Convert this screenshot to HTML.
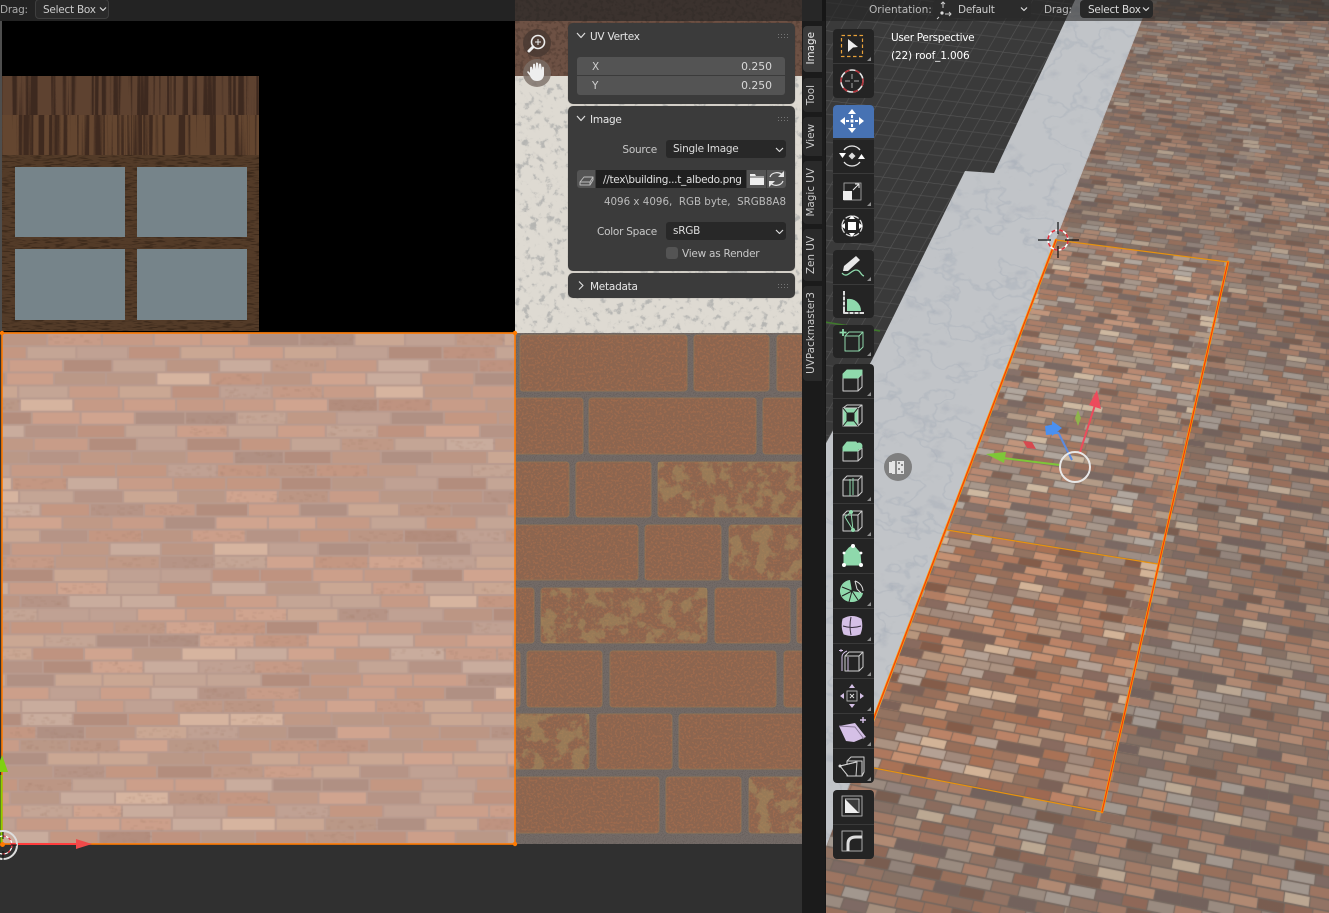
<!DOCTYPE html>
<html><head><meta charset="utf-8"><style>
html,body{margin:0;padding:0;background:#303030}
body{position:relative;width:1329px;height:913px;overflow:hidden;font:10.5px "DejaVu Sans","Liberation Sans",sans-serif;letter-spacing:-.25px;color:#ddd}
svg{color-interpolation-filters:sRGB}
.a{position:absolute}
svg,canvas{position:absolute;left:0;top:0}
.t{position:absolute;white-space:pre;line-height:14px;margin-top:1px}
.panel{position:absolute;left:568px;width:227px;background:#3b3b3b;border-radius:5px;box-shadow:0 0 1px rgba(0,0,0,.3)}
.f{position:absolute;background:#545454}
.dd{position:absolute;background:#282828;border-radius:3px;height:18px;left:666px;width:120px;line-height:19px;text-indent:7px;color:#ddd}
.tab{position:absolute;left:803px;width:19px;background:#2a2a2a;border-radius:4px 0 0 4px;color:#ccc}
.tab span{position:absolute;left:1px;bottom:7px;writing-mode:vertical-rl;transform:rotate(180deg);line-height:15px;white-space:pre;font-size:10.4px;letter-spacing:0}
</style></head><body>

<div class="a" style="left:0;top:0;width:825px;height:913px;background:#303030"></div>
<div class="a" style="left:0;top:0;width:515px;height:332px;background:#000"></div>
<div class="a" style="left:515px;top:0;width:287px;height:76px;background:#6d5144"></div>
<div class="a" style="left:515px;top:75px;width:287px;height:258px;background:#dedad2"></div>
<div class="a" style="left:2px;top:333px;width:513px;height:511px;background:#c89f8d"></div>
<div class="a" style="left:515px;top:333px;width:287px;height:511px;background:#84604a"></div>
<div class="a" style="left:825px;top:0;width:504px;height:913px;background:#3a3a3a"></div>

<svg width="1329" height="913" viewBox="0 0 1329 913">
<defs>
<filter id="crack" x="0" y="0" width="100%" height="100%"><feTurbulence type="fractalNoise" baseFrequency=".13" numOctaves="5" seed="7"/><feColorMatrix values="0 0 0 0 .71 0 0 0 0 .71 0 0 0 0 .70 1 0 0 0 0"/><feComponentTransfer><feFuncA type="table" tableValues="0 0 0 0 0 0 .1 .8 1 1 1"/></feComponentTransfer></filter>
<filter id="vein" x="0" y="0" width="100%" height="100%"><feTurbulence type="fractalNoise" baseFrequency=".02 .03" numOctaves="4" seed="3"/><feColorMatrix values="0 0 0 0 .62 0 0 0 0 .65 0 0 0 0 .70 1 0 0 0 0"/><feComponentTransfer><feFuncA type="table" tableValues="0 0 0 0 0 0 0 0 0 0 0 0 0 0 0 .7 0 0 0 0 0 0 0 0 0 0 0 0 0 0 0"/></feComponentTransfer></filter>
<filter id="spot" x="0" y="0" width="100%" height="100%"><feTurbulence type="fractalNoise" baseFrequency=".04 .06" numOctaves="4" seed="18"/><feColorMatrix values="0 0 0 0 .62 0 0 0 0 .65 0 0 0 0 .70 1 0 0 0 0"/><feComponentTransfer><feFuncA type="table" tableValues="0 0 0 0 0 0 0 .3 .9 1 1"/></feComponentTransfer></filter>
<filter id="mott" x="0" y="0" width="100%" height="100%"><feTurbulence type="fractalNoise" baseFrequency=".45" numOctaves="2" seed="5"/><feColorMatrix values="0 0 0 0 .67 0 0 0 0 .44 0 0 0 0 .31 7 0 0 0 -3.5"/></filter>
<filter id="grain2" x="0" y="0" width="100%" height="100%"><feTurbulence type="fractalNoise" baseFrequency=".09 .7" numOctaves="2" seed="9"/><feColorMatrix values="0 0 0 0 .18 0 0 0 0 .12 0 0 0 0 .08 7 0 0 0 -3.6"/></filter>
<filter id="wood" x="0" y="0" width="100%" height="100%"><feTurbulence type="fractalNoise" baseFrequency=".18 .002" numOctaves="3" seed="11"/><feColorMatrix values="0 0 0 0 .2 0 0 0 0 .13 0 0 0 0 .1 8 0 0 0 -4"/></filter>
<filter id="wood2" x="0" y="0" width="100%" height="100%"><feTurbulence type="fractalNoise" baseFrequency=".2 .002" numOctaves="3" seed="23"/><feColorMatrix values="0 0 0 0 .2 0 0 0 0 .13 0 0 0 0 .1 8 0 0 0 -4"/></filter>
<filter id="blotch" x="0" y="0" width="100%" height="100%"><feTurbulence type="fractalNoise" baseFrequency=".07" numOctaves="4" seed="14"/><feColorMatrix values="0 0 0 0 .64 0 0 0 0 .56 0 0 0 0 .38 9 0 0 0 -4.4"/></filter>
<filter id="mort" x="0" y="0" width="100%" height="100%"><feTurbulence type="fractalNoise" baseFrequency=".9" numOctaves="1" seed="2"/><feColorMatrix values="0 0 0 0 .3 0 0 0 0 .28 0 0 0 0 .27 7 0 0 0 -3.5"/></filter>
<filter id="browng" x="0" y="0" width="100%" height="100%"><feTurbulence type="fractalNoise" baseFrequency=".25" numOctaves="3" seed="6"/><feColorMatrix values="0 0 0 0 .32 0 0 0 0 .24 0 0 0 0 .2 7 0 0 0 -3.5"/></filter>
<pattern id="grid" width="75" height="75" patternUnits="userSpaceOnUse" patternTransform="matrix(.99 .12 -.5 .87 0 0)"><path d="M15 0V75M30 0V75M45 0V75M60 0V75M0 15H75M0 30H75M0 45H75M0 60H75" stroke="#4b4b4b" stroke-width="1" fill="none"/><path d="M0 0H75M0 0V75" stroke="#585858" stroke-width="1.2" fill="none"/></pattern>
<clipPath id="marbleC"><path d="M1075 0H1150L1056 240 875 720 825 850V445L872 360 965 171 994 173Z"/></clipPath>
<clipPath id="rbC"><rect x="515" y="333" width="287" height="511"/></clipPath>
<clipPath id="patch"><rect x="658" y="462" width="150" height="55"/><rect x="729" y="525" width="80" height="55"/><rect x="541" y="588" width="166" height="55"/><rect x="505" y="714" width="84" height="55"/><rect x="749" y="777" width="60" height="56"/></clipPath>
<g id="bks">
<rect x="520" y="335" rx="3" width="167" height="56"/><rect x="694" y="335" rx="3" width="75" height="56"/><rect x="777" y="335" rx="3" width="40" height="56"/>
<rect x="505" y="398" rx="3" width="78" height="56"/><rect x="589" y="398" rx="3" width="167" height="56"/><rect x="763" y="398" rx="3" width="50" height="56"/>
<rect x="505" y="462" rx="3" width="64" height="55"/><rect x="576" y="462" rx="3" width="75" height="55"/><rect x="658" y="462" rx="3" width="150" height="55"/>
<rect x="505" y="525" rx="3" width="133" height="55"/><rect x="645" y="525" rx="3" width="76" height="55"/><rect x="729" y="525" rx="3" width="80" height="55"/>
<rect x="505" y="588" rx="3" width="29" height="55"/><rect x="541" y="588" rx="3" width="166" height="55"/><rect x="715" y="588" rx="3" width="75" height="55"/><rect x="797" y="588" rx="3" width="20" height="55"/>
<rect x="505" y="651" rx="3" width="15" height="56"/><rect x="527" y="651" rx="3" width="75" height="56"/><rect x="610" y="651" rx="3" width="166" height="56"/><rect x="784" y="651" rx="3" width="30" height="56"/>
<rect x="505" y="714" rx="3" width="84" height="55"/><rect x="597" y="714" rx="3" width="75" height="55"/><rect x="679" y="714" rx="3" width="130" height="55"/>
<rect x="505" y="777" rx="3" width="154" height="56"/><rect x="666" y="777" rx="3" width="75" height="56"/><rect x="749" y="777" rx="3" width="60" height="56"/>
</g>
<mask id="bkm" maskUnits="userSpaceOnUse" x="500" y="330" width="320" height="520"><use href="#bks" fill="#fff"/></mask>
</defs>

<rect x="515" y="75" width="287" height="258" filter="url(#crack)"/>
<rect x="515" y="0" width="287" height="76" fill="#6d5144"/>
<rect x="515" y="0" width="287" height="76" filter="url(#browng)" opacity=".6"/>

<rect x="2" y="76" width="257" height="40" fill="#5e4230"/>
<rect x="2" y="76" width="257" height="39" filter="url(#wood)" opacity=".75"/>
<rect x="2" y="115" width="257" height="40" fill="#644630"/>
<rect x="2" y="115" width="257" height="40" filter="url(#wood2)" opacity=".75"/>
<rect x="2" y="155" width="257" height="176" fill="#533b28"/>
<rect x="2" y="155" width="257" height="176" filter="url(#grain2)" opacity=".55"/>
<g fill="#76848a"><rect x="15" y="167" width="110" height="70"/><rect x="137" y="167" width="110" height="70"/><rect x="15" y="249" width="110" height="71"/><rect x="137" y="249" width="110" height="71"/></g>
<rect x="0" y="21" width="2" height="310" fill="#4e4e4e"/>

<g clip-path="url(#rbC)">
<rect x="515" y="333" width="287" height="511" fill="#736a66"/>
<rect x="515" y="333" width="287" height="511" filter="url(#mort)" opacity=".25"/>
<use href="#bks" fill="#8c654f" stroke="#8f7153" stroke-width="1"/>
<g mask="url(#bkm)"><rect x="515" y="333" width="287" height="511" filter="url(#mott)" opacity=".55"/></g>
<g clip-path="url(#patch)"><rect x="515" y="333" width="287" height="511" filter="url(#blotch)" opacity=".5"/></g>
</g>

<rect x="825" y="0" width="504" height="913" fill="url(#grid)"/>
<path d="M825 322L880 331" stroke="#3f7a2c" stroke-width="1.5"/>
<path d="M1075 0H1150L1056 240 875 720 825 850V445L872 360 965 171 994 173Z" fill="#c1c4c8"/>
<g clip-path="url(#marbleC)"><rect x="825" y="0" width="330" height="851" filter="url(#spot)" opacity=".35"/><rect x="825" y="0" width="330" height="851" filter="url(#vein)" opacity=".45"/></g>
<path d="M1150 0H1329V913H825V850L875 720 1056 240Z" fill="#98776a"/>
</svg>

<canvas id="cL" width="513" height="511" style="left:2px;top:333px"></canvas>
<canvas id="cV" width="504" height="913" style="left:825px;top:0"></canvas>

<svg width="1329" height="913" viewBox="0 0 1329 913">
<defs><linearGradient id="dk" x1="0" y1="0" x2="0" y2="1"><stop offset="0" stop-color="#6a6462" stop-opacity=".38"/><stop offset=".5" stop-color="#6a6462" stop-opacity=".2"/><stop offset="1" stop-color="#6a6462" stop-opacity=".22"/></linearGradient></defs>
<path d="M1150 0H1329V913H825V850L856 765 1102 812 1228 262 1056 240Z" fill="url(#dk)"/>
<path d="M947 530L1158 564 1102 812 856 765Z" fill="#d86a2a" opacity=".07"/>
<path d="M1056 240L1228 262 1158 564 947 530Z" fill="#a8a8a8" opacity=".1"/>
<g fill="none" stroke-linecap="round">
<path d="M1056 240L1228 262" stroke="#e8920e" stroke-width="1.2"/>
<path d="M947 530L1158 564" stroke="#e8920e" stroke-width="1.2"/>
<path d="M874 768L1102 812" stroke="#e8920e" stroke-width="1.2"/>
<path d="M1056 240L856 765" stroke="#ff9a00" stroke-width="2.6"/>
<path d="M1056 240L856 765" stroke="#f03a10" stroke-width="1.1"/>
<path d="M1228 262L1102 812" stroke="#ff9a00" stroke-width="2.6"/>
<path d="M1228 262L1102 812" stroke="#f03a10" stroke-width="1.1"/>
</g>
<circle cx="1058" cy="240" r="10" fill="none" stroke="#fff" stroke-width="1.6"/>
<circle cx="1058" cy="240" r="10" fill="none" stroke="#e0303c" stroke-width="1.6" stroke-dasharray="4 4"/>
<path d="M1038 240H1051M1065 240H1079M1058 222V234M1058 246V258" stroke="#111" stroke-width="1.2"/>
<g fill="none">
<path d="M1080 452L1095 405" stroke="#ec4b5c" stroke-width="2"/><path d="M1097 390L1101 409 1089 405Z" fill="#ec4b5c"/>
<path d="M1060 465L1003 458" stroke="#7ec638" stroke-width="2"/><path d="M986 454L1006 452 1004 463Z" fill="#7ec638"/>
<path d="M1072 460L1058 432" stroke="#5b8be0" stroke-width="2"/><path d="M1052 421L1062 428 1052 436Z" fill="#4a90f0"/><path d="M1045 426L1056 424 1058 434 1046 435Z" fill="#4a90f0"/>
<path d="M1078 410L1081 418 1078 426 1075 418Z" fill="#8fb44c"/>
<path d="M1023 441L1032 442 1036 449 1027 448Z" fill="#d6494f"/>
<circle cx="1075" cy="467" r="15" stroke="#e8e8e8" stroke-width="2"/>
</g>
<circle cx="898" cy="467" r="14" fill="#7f7f7f"/>
<path d="M892 461h12v13h-12zM889 462h3v11h-3z" fill="#e4e4e4"/><path d="M896 461v13M899 462v2M902 464v2M899 468v2M902 471v2" stroke="#8a8a8a" stroke-width="2"/>

<rect x="2" y="333" width="513" height="511" fill="none" stroke="#ff7a00" stroke-width="1.6"/>
<g fill="#ff7a00"><circle cx="2" cy="333" r="2.2"/><circle cx="515" cy="333" r="2.2"/><circle cx="515" cy="844" r="2.2"/></g>
<path d="M1.500 844V775" stroke="#8bd000" stroke-width="2"/><path d="M2 755L8 772H-4Z" fill="#7fd010"/>
<path d="M10 844H78" stroke="#ff3c3c" stroke-width="2"/><path d="M92 844L76 839V849Z" fill="#f04a4a"/>
<circle cx="3" cy="845" r="14" fill="none" stroke="#ddd" stroke-width="2"/>
<circle cx="3" cy="845" r="9" fill="none" stroke="#fff" stroke-width="1.2"/>
<circle cx="3" cy="845" r="9" fill="none" stroke="#e0303c" stroke-width="1.2" stroke-dasharray="3 3"/>
<path d="M3 832V839M3 851V860M11 845H17" stroke="#111" stroke-width="1"/>
<circle cx="2.500" cy="844.500" r="2.500" fill="#ff7a00"/>
</svg>

<div class="a" style="left:0;top:0;width:515px;height:21px;background:#232323"></div>
<div class="a" style="left:515px;top:0;width:310px;height:21px;background:rgba(35,35,35,.68)"></div>
<div class="a" style="left:825px;top:0;width:504px;height:21px;background:rgba(35,35,35,.58)"></div>
<div class="a" style="left:0;top:21px;width:2px;height:310px;background:#4e4e4e"></div>
<div class="t" style="left:0;top:2px;color:#aaa">Drag:</div>
<div class="a" style="left:35px;top:-1px;width:72px;height:18px;background:#2a2a2a;border:1px solid #3f3f3f;border-radius:4px"></div>
<div class="t" style="left:43px;top:2px;color:#ccc">Select Box</div>
<div class="t" style="left:869px;top:2px;color:#bbb;font-size:10.6px;letter-spacing:-.05px">Orientation:</div>
<div class="a" style="left:933px;top:0;width:98px;height:18px;background:#2b2b2b;border-radius:4px"></div>
<div class="t" style="left:958px;top:2px;color:#ccc">Default</div>
<div class="t" style="left:1044px;top:2px;color:#bbb">Drag:</div>
<div class="a" style="left:1080px;top:0;width:73px;height:18px;background:#282828;border-radius:4px"></div>
<div class="t" style="left:1088px;top:2px;color:#ddd">Select Box</div>

<div class="a" style="left:802px;top:21px;width:23px;height:892px;background:#1b1b1b"></div>
<div class="a" style="left:822px;top:0;width:3px;height:21px;background:#161616"></div>
<div class="a" style="left:825px;top:0;width:1px;height:913px;background:#161616"></div>
<div class="tab" style="top:26px;height:46px;background:#3b3b3b;color:#eee"><span>Image</span></div>
<div class="tab" style="top:78px;height:34px"><span>Tool</span></div>
<div class="tab" style="top:117px;height:39px"><span>View</span></div>
<div class="tab" style="top:161px;height:63px"><span>Magic UV</span></div>
<div class="tab" style="top:229px;height:52px"><span>Zen UV</span></div>
<div class="tab" style="top:286px;height:95px"><span>UVPackmaster3</span></div>

<div class="panel" style="top:23px;height:81px"></div>
<div class="panel" style="top:106px;height:165px"></div>
<div class="panel" style="top:273px;height:25px"></div>
<div class="t" style="left:590px;top:29px;color:#e6e6e6">UV Vertex</div>
<div class="f" style="left:577px;top:57px;width:208px;height:18px;border-radius:3px 3px 0 0"></div>
<div class="f" style="left:577px;top:76px;width:208px;height:19px;border-radius:0 0 3px 3px"></div>
<div class="t" style="left:592px;top:59px;color:#d0d0d0">X</div>
<div class="t" style="left:592px;top:78px;color:#d0d0d0">Y</div>
<div class="t" style="right:557px;top:59px;color:#d8d8d8;font-size:10.8px;letter-spacing:0">0.250</div>
<div class="t" style="right:557px;top:78px;color:#d8d8d8;font-size:10.8px;letter-spacing:0">0.250</div>
<div class="t" style="left:590px;top:112px;color:#e6e6e6">Image</div>
<div class="t" style="right:672px;top:142px;color:#c8c8c8">Source</div>
<div class="dd" style="top:140px">Single Image</div>
<div class="f" style="left:577px;top:170px;width:18px;height:18px;border-radius:3px 0 0 3px"></div>
<div class="a" style="left:596px;top:170px;width:150px;height:18px;background:#1f1f1f"></div>
<div class="t" style="left:603px;top:172px;color:#e0e0e0;letter-spacing:-.3px">//tex\building...t_albedo.png</div>
<div class="f" style="left:747px;top:170px;width:19px;height:18px"></div>
<div class="f" style="left:767px;top:170px;width:19px;height:18px;border-radius:0 3px 3px 0"></div>
<div class="t" style="right:543px;top:194px;color:#bcbcbc;font-size:10.3px;letter-spacing:0">4096 x 4096,  RGB byte,  SRGB8A8</div>
<div class="t" style="right:672px;top:224px;color:#c8c8c8">Color Space</div>
<div class="dd" style="top:222px">sRGB</div>
<div class="a" style="left:666px;top:247px;width:12px;height:12px;background:#545454;border-radius:3px"></div>
<div class="t" style="left:682px;top:246px;color:#c8c8c8">View as Render</div>
<div class="t" style="left:590px;top:279px;color:#e6e6e6">Metadata</div>

<div class="t" style="left:891px;top:30px;color:#fff;letter-spacing:-.3px">User Perspective</div>
<div class="t" style="left:891px;top:48px;color:#fff;letter-spacing:-.15px">(22) roof_1.006</div>

<div class="a" style="left:833px;top:29px;width:41px;height:69px;background:#242424;border-radius:4px"></div>
<div class="a" style="left:833px;top:105px;width:41px;height:138px;background:#242424;border-radius:4px"></div>
<div class="a" style="left:833px;top:105px;width:41px;height:33px;background:#4772b3;border-radius:4px 4px 0 0"></div>
<div class="a" style="left:833px;top:250px;width:41px;height:68px;background:#242424;border-radius:4px"></div>
<div class="a" style="left:833px;top:325px;width:41px;height:33px;background:#242424;border-radius:4px"></div>
<div class="a" style="left:833px;top:364px;width:41px;height:419px;background:#242424;border-radius:4px"></div>
<div class="a" style="left:833px;top:790px;width:41px;height:69px;background:#242424;border-radius:4px"></div>

<svg width="1329" height="913" viewBox="0 0 1329 913">
<path d="M833 63.5H874M833 173.5H874M833 208.5H874M833 284.5H874M833 398.5H874M833 433.5H874M833 468.5H874M833 503.5H874M833 538.5H874M833 573.5H874M833 608.5H874M833 643.5H874M833 678.5H874M833 713.5H874M833 748.5H874M833 824.5H874M833 139H874" stroke="#3a3a3a" stroke-width="1"/>
<g fill="#8f8f8f">
<path d="M871 57v4h-4zM871 202v4h-4zM871 277v4h-4zM871 352v4h-4zM871 392v4h-4zM871 497v4h-4zM871 532v4h-4zM871 602v4h-4zM871 637v4h-4zM871 672v4h-4zM871 707v4h-4zM871 742v4h-4zM871 777v4h-4z"/>
</g>
<g fill="none" stroke="#cfcfcf" stroke-width="1" stroke-linejoin="round">
<g transform="translate(852 46)"><rect x="-10.5" y="-10.5" width="21" height="21" stroke="#e8a13a" stroke-width="1.2" stroke-dasharray="3.5 2.5"/><path d="M-4-7L6 1 1 1.5-4 6Z" fill="#eee" stroke="none"/></g>
<g transform="translate(852 81)"><circle r="11" stroke="#e8e8e8" stroke-width="1.6"/><circle r="11" stroke="#b03038" stroke-width="1.6" stroke-dasharray="5 6"/><path d="M-7 0H-2M2 0H7M0-7V-2M0 2V7" stroke="#aaa"/></g>
<g transform="translate(852 121)" fill="#fff" stroke="none"><path d="M0-12L4-7H-4ZM0 12L-4 7H4ZM-12 0L-7-4V4ZM12 0L7 4V-4Z"/><rect x="-1.5" y="-1.5" width="3" height="3"/><path d="M-1-6h2v3h-2zM-1 3h2v3h-2zM-6-1h3v2h-3zM3-1h3v2h-3z"/></g>
<g transform="translate(852 156)"><path d="M-8-6A10 10 0 0 1 8-6M8 6A10 10 0 0 1-8 6" stroke="#e8e8e8" stroke-width="1.3"/><path d="M-13-3H-6L-9.500 2ZM6 3L13 3 9.500-2Z" fill="#fff" stroke="none"/><path d="M0-3.500L3.500 0 0 3.500-3.500 0Z" fill="#ddd" stroke="none"/></g>
<g transform="translate(852 191)"><rect x="-8" y="-8" width="17" height="17" stroke="#999"/><rect x="-9" y="0" width="9" height="9" fill="#eee" stroke="none"/><path d="M1-1L7-7M3-7H7V-3" stroke="#eee"/></g>
<g transform="translate(852 226)"><circle r="10" stroke="#ddd" stroke-width="1.3" stroke-dasharray="6 2"/><rect x="-4" y="-4" width="8" height="8" fill="#fff" stroke="none"/><path d="M0-11L3-7H-3ZM0 11L-3 7H3ZM-11 0L-7-3V3ZM11 0L7 3V-3Z" fill="#fff" stroke="none"/></g>
<g transform="translate(852 266)"><path d="M-10 7C-5 13 -1 4 4 4S8 9 12 10" stroke="#8fd9ac" stroke-width="1.3"/><path d="M-9 5L-8 0 4-10 8-6-4 5Z" fill="#e8e8e8" stroke="none"/></g>
<g transform="translate(852 302)"><path d="M-8-11V11H12" stroke="#ddd" stroke-width="2"/><path d="M-5 9V-3A12 12 0 0 1 9 9Z" fill="#8fd9ac" stroke="none"/><path d="M-9-6h3M-9-1h3M-9 4h3M-3 12v-2M2 12v-2M7 12v-2" stroke="#222"/></g>
<g transform="translate(852 341)"><path d="M-7-5H7V10H-7ZM-7-5L-3-9H11L7-5M11-9V6L7 10" stroke="#8fd9ac"/><path d="M-9-12V-5M-12.5-8.5H-5.5" stroke="#8fd9ac" stroke-width="1.8"/></g>

<g transform="translate(852 381)"><path d="M-9-3H6V10H-9ZM6-3L10-7V6L6 10"/><path d="M-9-3V-7L-5-11H10V-7L6-3Z" fill="#8fd9ac" stroke="#8fd9ac"/></g>
<g transform="translate(852 416)"><path d="M-9-8H6V10H-9Z" fill="#8fd9ac" stroke="#cfcfcf"/><path d="M-9-8L-5-11H10L6-8M10-11V6L6 10"/><rect x="-5" y="-3" width="7" height="8" fill="#222" stroke="#222"/><path d="M-9-8L-5-3M6-8L2-3M-9 10L-5 5M6 10L2 5" stroke="#222"/></g>
<g transform="translate(852 451)"><path d="M-9 0H6V10H-9ZM6 0L10-3V6L6 10"/><path d="M-9 0V-4L-5-9H4L6-6V0Z" fill="#8fd9ac" stroke="#8fd9ac"/><circle cx="7" cy="-5" r="3.500" fill="#8fd9ac" stroke="none"/></g>
<g transform="translate(852 486)"><path d="M-9-6H6V10H-9ZM6-6L10-10V6L6 10M-9-6L-5-10H10"/><path d="M-2-7V10M1-8V9" stroke="#8fd9ac"/></g>
<g transform="translate(852 521)"><path d="M-9-6H6V10H-9ZM6-6L10-10V6L6 10M-9-6L-5-10H10"/><path d="M-7-4L-1-9 1 9Z" stroke="#8fd9ac" fill="none"/><circle cx="-1" cy="-9" r="2" fill="#8fd9ac" stroke="none"/><circle cx="1" cy="9" r="2" fill="#8fd9ac" stroke="none"/></g>
<g transform="translate(852 556)"><path d="M-8 9V-2L-3-8 1-11 8-3 9 9Z" fill="#8fd9ac" stroke="#8fd9ac"/><g fill="#fff" stroke="none"><circle cx="1" cy="-10" r="2"/><circle cx="-8" cy="9" r="2"/><circle cx="9" cy="9" r="2"/><circle cx="9" cy="-3" r="1.400"/><circle cx="-8" cy="-3" r="1.400"/></g></g>
<g transform="translate(852 591)"><path d="M0 0L-2-11A11 11 0 0 0 0 11 11 11 0 0 0 11 2Z" fill="#8fd9ac" stroke="none"/><path d="M0 0L-10-4M0 0L-10 5M0 0L-3 11M0 0L6 9M0 0V-11" stroke="#222"/><path d="M3-10A11 11 0 0 1 11 0" stroke="#ddd"/><path d="M3-10L5-2 9 2" stroke="#ddd"/></g>
<g transform="translate(852 626)"><path d="M-9-7Q0-12 9-7 11 1 8 8 0 11-8 8-11 1-9-7Z" fill="#d5c0e6" stroke="#d5c0e6"/><path d="M-9 0Q0 3 9 0M-1-9Q-3 0-1 9" stroke="#332c3a"/></g>
<g transform="translate(852 661)"><path d="M-7-5H7V10H-7ZM7-5L11-9V6L7 10M-7-5L-3-9H11"/><path d="M-10-4V10M-4-4V10" stroke="#d5c0e6"/><path d="M-10-4Q-10-8-5-10" stroke="#d5c0e6"/><path d="M-11-12V-9M-13-10.500H-9" stroke="#d5c0e6"/></g>
<g transform="translate(852 696)"><rect x="-5" y="-5" width="10" height="10" stroke="#aaa"/><path d="M0-12L3-8H-3ZM0 12L-3 8H3ZM-12 0L-8-3V3ZM12 0L8 3V-3Z" fill="#d5c0e6" stroke="none"/><path d="M-2-2L2 2M2-2L-2 2" stroke="#ddd"/></g>
<g transform="translate(852 731)"><path d="M-13-5L3-8 14 6 2 11-6 10Z" fill="#d5c0e6" stroke="none"/><path d="M-13-5L3-4 12 8" stroke="#8a7a98"/><path d="M11-14V-8M8-11H14" stroke="#d5c0e6" stroke-width="1.4"/></g>
<g transform="translate(852 766)"><path d="M-5-5H10V10H-5ZM-5-5L-1-9H12V6L10 10"/><path d="M-12 0L5-4 4 10H-4Z" fill="#242424"/><path d="M-12 0L4-4M-12 0L-4 10H6"/><circle cx="-12" cy="0" r="1.500" fill="#ddd" stroke="none"/></g>

<g transform="translate(852 806)"><path d="M-7-7H7V7" stroke="#bbb" fill="#3a3a3a"/><path d="M-7-7L7 7H-7Z" fill="#eee" stroke="none"/><rect x="-10" y="-10" width="20" height="20" stroke="#aaa"/></g>
<g transform="translate(852 841)"><rect x="-10" y="-10" width="20" height="20" stroke="#aaa"/><path d="M-4 10V3Q-4-4 4-4H10" stroke="#ddd" stroke-width="3" fill="none"/></g>

<g transform="translate(943 9)" stroke="#ccc" stroke-width="1"><path d="M0-7V-1M-2-5L0-7 2-5M2 5H8M6 3L8 5 6 7"/><circle cx="-1" cy="4" r="1.600" fill="#ddd" stroke="none"/><path d="M-4 8L-6 10"/></g>
<g stroke="#ddd" stroke-width="1.2">
<path d="M100 7.500L103 10.500 106 7.500"/><path d="M1021 7.500L1024 10.500 1027 7.500"/><path d="M1143 7.500L1146 10.500 1149 7.500"/>
<path d="M776 148L779.500 151.500 783 148"/><path d="M776 230L779.500 233.500 783 230"/>
<path d="M577 33L581 37.500 585 33"/><path d="M577 116L581 120.500 585 116"/><path d="M579 281.500L583 285.500 579 289.500"/>
</g>
<g fill="#757575" stroke="none"><path d="M778 34h1v1h-1zM781 34h1v1h-1zM784 34h1v1h-1zM787 34h1v1h-1zM778 37h1v1h-1zM781 37h1v1h-1zM784 37h1v1h-1zM787 37h1v1h-1zM778 117h1v1h-1zM781 117h1v1h-1zM784 117h1v1h-1zM787 117h1v1h-1zM778 120h1v1h-1zM781 120h1v1h-1zM784 120h1v1h-1zM787 120h1v1h-1zM778 284h1v1h-1zM781 284h1v1h-1zM784 284h1v1h-1zM787 284h1v1h-1zM778 287h1v1h-1zM781 287h1v1h-1zM784 287h1v1h-1zM787 287h1v1h-1z"/></g>
<path d="M580 182L584 177H593L590 182V185H580Z M580 182H590M593 177V180L590 185" stroke="#bbb" stroke-width="1" fill="none"/>
<path d="M750 174H755L756 176H764V185H750Z" fill="#eee" stroke="none"/><path d="M750 177H764" stroke="#545454"/>
<path d="M770 177A7 6 0 0 1 783 176M783 181A7 6 0 0 1 770 182" stroke="#e8e8e8" stroke-width="1.2" fill="none"/><path d="M784 171V177H778Z" fill="#e8e8e8" stroke="none"/><path d="M769 187V181H775Z" fill="#e8e8e8" stroke="none"/>
</g>
</svg>

<svg width="1329" height="913" viewBox="0 0 1329 913">
<circle cx="537" cy="43" r="14" fill="#4a3a33" opacity=".85"/>
<circle cx="537" cy="73" r="14" fill="#7a6e66" opacity=".8"/>
<circle cx="538" cy="42" r="6.500" fill="none" stroke="#eee" stroke-width="1.6"/><path d="M533 47L529 51" stroke="#eee" stroke-width="3" stroke-linecap="round"/><path d="M535 42H541M538 39V45" stroke="#eee"/>
<path d="M530 73V68Q530 66 532 67L533 70V65Q533 63 535 64L536 69V63Q536 62 538 63L539 69V64Q540 63 541 64L542 70V67Q544 66 544 68L544 75Q543 81 537 81 532 81 530 76L527 72Q528 70 530 73Z" fill="#eee"/>
</svg>

<script>
(function(){
var s=12345;function R(){s=(s*1664525+1013904223)>>>0;return s/4294967296}
var P=[[166,116,90],[176,128,104],[154,106,85],[143,117,102],[196,148,120],[168,150,136],[126,92,76],[181,154,132],[148,112,94],[172,122,98],[158,140,130],[186,134,108],[132,108,100],[158,120,100],[178,166,156],[118,98,92]];
var rows=39,bricks=[];
for(var r=0;r<rows;r++){var off=R(),row=[];var u=-off/10;while(u<1.02){var w=(.088+R()*.016);var c=P[Math.floor(R()*P.length)];if(R()<.035)c=[210,186,160];row.push([u,w,c]);u+=w+.004}bricks.push(row)}
var M=[156,120,100];
function mix(c,k){return[c[0]*k+M[0]*(1-k),c[1]*k+M[1]*(1-k),c[2]*k+M[2]*(1-k)]}
var L=document.getElementById('cL'),g=L.getContext('2d');
g.fillStyle='#b99b8f';g.fillRect(0,0,513,511);
for(r=0;r<rows;r++){var y=r*13.1+1;bricks[r].forEach(function(b){var c=mix(b[2],.68);var m=[Math.round(c[0]*.6+245*.4),Math.round(c[1]*.6+202*.4),Math.round(c[2]*.6+186*.4)];g.fillStyle='rgb('+m+')';g.fillRect(b[0]*513,y,b[1]*513,11.2);if(R()<.22){for(var i=0;i<16;i++){g.fillStyle='rgba(165,130,115,.16)';g.fillRect(b[0]*513+R()*b[1]*513,y+R()*10,2+R()*3,1+R()*2)}}})}
var V=document.getElementById('cV'),v=V.getContext('2d');
var off2=document.createElement('canvas');off2.width=504;off2.height=913;var o=off2.getContext('2d');
var X=825;
var x0=1056-X,y0=240,x1=1228-X,y1=262,x2=1102-X,y2=812,x3=856-X,y3=765;
var dx1=x1-x2,dx2=x3-x2,sx=x0-x1+x2-x3,dy1=y1-y2,dy2=y3-y2,sy=y0-y1+y2-y3;
var det=dx1*dy2-dx2*dy1,G=(sx*dy2-dx2*sy)/det,H=(dx1*sy-sx*dy1)/det;
var A=x1-x0+G*x1,B=x3-x0+H*x3,C=x0,D=y1-y0+G*y1,E=y3-y0+H*y3,F=y0;
function T(a,b){var q=G*a+H*b+1;return[(A*a+B*b+C)/q,(D*a+E*b+F)/q]}
o.fillStyle='#78695f';o.fillRect(0,0,504,913);
for(var vi=-140;vi<140;vi++){var rowb=bricks[((vi%rows)+rows)%rows];var a1=vi/78,a2=(vi+.86)/78;
 for(var ui=-4;ui<9;ui++){for(var k=0;k<rowb.length;k++){var b=rowb[k],a=ui+b[0],w=b[1];
  if(G*a+H*a1+1<=.08)continue;
  var p=T(a,a1),q=T(a+w,a1),t=T(a+w,a2),z=T(a,a2);
  if(p[0]<-40||p[0]>544||p[1]<-20||p[1]>940)continue;
  o.fillStyle='rgb('+b[2].map(Math.round)+')';o.beginPath();o.moveTo(p[0],p[1]);o.lineTo(q[0],q[1]);o.lineTo(t[0],t[1]);o.lineTo(z[0],z[1]);o.closePath();o.fill();
 }}}
v.save();v.beginPath();v.moveTo(1150-X,0);v.lineTo(504,0);v.lineTo(504,913);v.lineTo(0,913);v.lineTo(0,850);v.lineTo(875-X,720);v.lineTo(1056-X,240);v.closePath();v.clip();
try{v.filter='blur(.55px)'}catch(e){}
v.drawImage(off2,0,0);v.restore();
})();
</script>
</body></html>
